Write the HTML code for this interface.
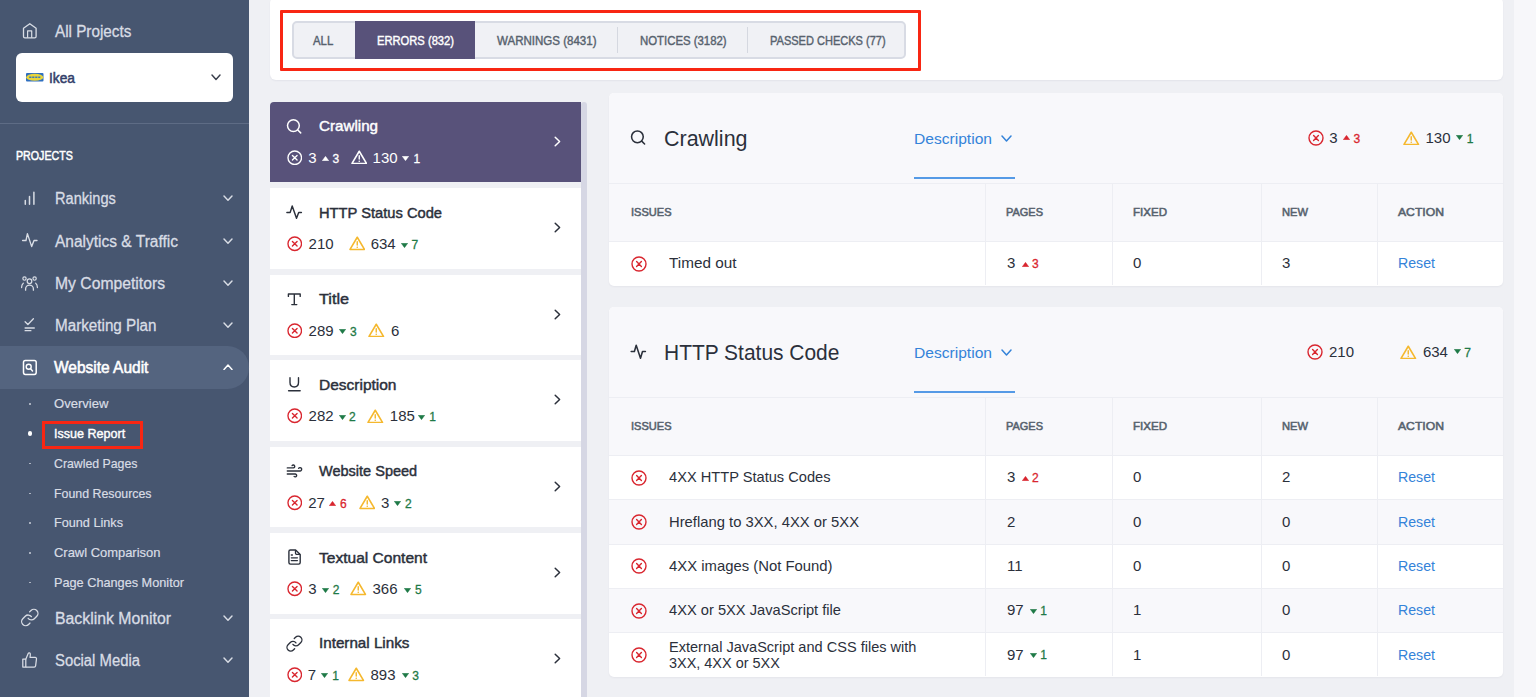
<!DOCTYPE html>
<html><head><meta charset="utf-8"><style>
html,body{margin:0;padding:0;}
body{width:1536px;height:697px;overflow:hidden;position:relative;background:#eff0f4;font-family:"Liberation Sans", sans-serif;}
</style></head><body>
<div style="position:absolute;left:0px;top:0px;width:249px;height:697px;background:#475670;"></div>
<svg style="position:absolute;left:20px;top:20px;" width="20" height="21" viewBox="20 20 20 21" fill="none"><path d="M23.5 28.3L29.8 23.7L36.1 28.3V36.4Q36.1 37.8 34.7 37.8H24.9Q23.5 37.8 23.5 36.4Z" stroke="#d9dde5" stroke-width="1.3" stroke-linejoin="round"/><path d="M27.6 37.8V30.8H31.7V37.8" stroke="#d9dde5" stroke-width="1.2" stroke-linejoin="round"/></svg>
<div style="position:absolute;left:54.50px;top:22.80px;font-size:16px;line-height:17.00px;font-weight:400;color:#d9dde5;white-space:nowrap;transform:scaleX(0.9533);transform-origin:0 0;-webkit-text-stroke:0.3px currentColor;">All Projects</div>
<div style="position:absolute;left:16px;top:53px;width:217px;height:48.6px;background:#fff;border-radius:6px;"></div>
<svg style="position:absolute;left:26px;top:73px;" width="17.5" height="8.5" viewBox="0 0 17.5 8.5" fill="none"><rect x="0" y="0" width="17.5" height="8.5" rx="1" fill="#2f6fc0"/><ellipse cx="8.75" cy="4.25" rx="8.5" ry="3.6" fill="#e8d43a"/><path d="M3.2 4.25H14.3" stroke="#3a7ab8" stroke-width="1.5" stroke-dasharray="2.2 0.8"/></svg>
<div style="position:absolute;left:48.90px;top:68.80px;font-size:15px;line-height:17.00px;font-weight:400;color:#33406a;white-space:nowrap;transform:scaleX(0.9159);transform-origin:0 0;-webkit-text-stroke:0.55px currentColor;">Ikea</div>
<svg style="position:absolute;left:211.3px;top:74.3px;" width="10" height="6.4" viewBox="0 0 10 6.4" fill="none"><path d="M1 1L5.0 5.4L9 1" stroke="#3a3f4c" stroke-width="1.45" stroke-linecap="round" stroke-linejoin="round"/></svg>
<div style="position:absolute;left:0px;top:123px;width:249px;height:1px;background:#5e6c85;"></div>
<div style="position:absolute;left:16.00px;top:149.20px;font-size:12px;line-height:14.00px;font-weight:400;color:#ffffff;white-space:nowrap;transform:scaleX(0.8872);transform-origin:0 0;-webkit-text-stroke:0.5px currentColor;">PROJECTS</div>
<div style="position:absolute;left:54.60px;top:190.00px;font-size:16px;line-height:17.00px;font-weight:400;color:#d9dde5;white-space:nowrap;transform:scaleX(0.9113);transform-origin:0 0;-webkit-text-stroke:0.3px currentColor;">Rankings</div>
<svg style="position:absolute;left:222.6px;top:195px;" width="10" height="6.2" viewBox="0 0 10 6.2" fill="none"><path d="M1 1L5.0 5.2L9 1" stroke="#d9dde5" stroke-width="1.45" stroke-linecap="round" stroke-linejoin="round"/></svg>
<div style="position:absolute;left:54.60px;top:232.50px;font-size:16px;line-height:17.00px;font-weight:400;color:#d9dde5;white-space:nowrap;transform:scaleX(0.9694);transform-origin:0 0;-webkit-text-stroke:0.3px currentColor;">Analytics &amp; Traffic</div>
<svg style="position:absolute;left:222.6px;top:237.5px;" width="10" height="6.2" viewBox="0 0 10 6.2" fill="none"><path d="M1 1L5.0 5.2L9 1" stroke="#d9dde5" stroke-width="1.45" stroke-linecap="round" stroke-linejoin="round"/></svg>
<div style="position:absolute;left:54.60px;top:274.80px;font-size:16px;line-height:17.00px;font-weight:400;color:#d9dde5;white-space:nowrap;transform:scaleX(0.9818);transform-origin:0 0;-webkit-text-stroke:0.3px currentColor;">My Competitors</div>
<svg style="position:absolute;left:222.6px;top:279.8px;" width="10" height="6.2" viewBox="0 0 10 6.2" fill="none"><path d="M1 1L5.0 5.2L9 1" stroke="#d9dde5" stroke-width="1.45" stroke-linecap="round" stroke-linejoin="round"/></svg>
<div style="position:absolute;left:54.60px;top:317.20px;font-size:16px;line-height:17.00px;font-weight:400;color:#d9dde5;white-space:nowrap;transform:scaleX(0.9511);transform-origin:0 0;-webkit-text-stroke:0.3px currentColor;">Marketing Plan</div>
<svg style="position:absolute;left:222.6px;top:322.2px;" width="10" height="6.2" viewBox="0 0 10 6.2" fill="none"><path d="M1 1L5.0 5.2L9 1" stroke="#d9dde5" stroke-width="1.45" stroke-linecap="round" stroke-linejoin="round"/></svg>
<svg style="position:absolute;left:20px;top:188px;" width="20" height="20" viewBox="20 188 20 20" fill="none"><path d="M25.3 204.3V200.6M29.5 204.3V196.4M33.9 204.3V192.3" stroke="#d9dde5" stroke-width="1.5" stroke-linecap="round"/></svg>
<svg style="position:absolute;left:20px;top:230px;" width="20" height="20" viewBox="20 230 20 20" fill="none"><path d="M22.6 240.5H26L27.4 233.6L31.7 246.6L34 240.5H37" stroke="#d9dde5" stroke-width="1.35" stroke-linecap="round" stroke-linejoin="round"/></svg>
<svg style="position:absolute;left:18px;top:272px;" width="24" height="22" viewBox="18 272 24 22" fill="none"><circle cx="29.5" cy="281.2" r="2.3" stroke="#d9dde5" stroke-width="1.25"/><circle cx="24.5" cy="278.6" r="1.65" stroke="#d9dde5" stroke-width="1.2"/><circle cx="34.6" cy="278.6" r="1.65" stroke="#d9dde5" stroke-width="1.2"/><path d="M25.6 290.2V288.9C25.6 286.8 27.3 285.1 29.5 285.1C31.7 285.1 33.4 286.8 33.4 288.9V290.2" stroke="#d9dde5" stroke-width="1.3" stroke-linecap="round"/><path d="M21.6 287.6C21.6 285.6 22.2 284 23.3 283.2M37.4 287.6C37.4 285.6 36.8 284 35.7 283.2" stroke="#d9dde5" stroke-width="1.25" stroke-linecap="round"/></svg>
<svg style="position:absolute;left:20px;top:314px;" width="20" height="20" viewBox="20 314 20 20" fill="none"><path d="M25.1 321.7L27.9 324.5L33.4 318.8" stroke="#d9dde5" stroke-width="1.3" stroke-linecap="round" stroke-linejoin="round"/><path d="M25.1 328H34.3M25.1 330.7H30.9" stroke="#d9dde5" stroke-width="1.3" stroke-linecap="round"/></svg>
<div style="position:absolute;left:0px;top:345.8px;width:248.5px;height:43px;background:#54647f;border-radius:0 21.5px 21.5px 0;"></div>
<svg style="position:absolute;left:20px;top:357px;" width="20" height="21" viewBox="20 357 20 21" fill="none"><rect x="23.5" y="360.5" width="12.7" height="13.9" rx="1.8" stroke="#fff" stroke-width="1.5"/><circle cx="28.7" cy="366.7" r="2.5" stroke="#fff" stroke-width="1.4"/><path d="M30.6 368.7L32.5 370.9" stroke="#fff" stroke-width="1.5" stroke-linecap="round"/></svg>
<div style="position:absolute;left:54.40px;top:359.30px;font-size:16px;line-height:17.00px;font-weight:400;color:#ffffff;white-space:nowrap;transform:scaleX(0.9676);transform-origin:0 0;-webkit-text-stroke:0.55px currentColor;">Website Audit</div>
<svg style="position:absolute;left:222.6px;top:364px;" width="10" height="6.4" viewBox="0 0 10 6.4" fill="none"><path d="M1 5.4L5.0 1L9 5.4" stroke="#ffffff" stroke-width="1.5" stroke-linecap="round" stroke-linejoin="round"/></svg>
<div style="position:absolute;left:54.30px;top:396.00px;font-size:13px;line-height:15.00px;font-weight:400;color:#d9dde5;white-space:nowrap;transform:scaleX(1.0035);transform-origin:0 0;-webkit-text-stroke:0.2px currentColor;">Overview</div>
<div style="position:absolute;left:29px;top:403px;width:1.6px;height:1.6px;background:#d9dde5;border-radius:50%;opacity:0.8;"></div>
<div style="position:absolute;left:54.30px;top:425.70px;font-size:13px;line-height:15.00px;font-weight:400;color:#ffffff;white-space:nowrap;transform:scaleX(0.9659);transform-origin:0 0;-webkit-text-stroke:0.4px currentColor;">Issue Report</div>
<div style="position:absolute;left:27.5px;top:431.3px;width:4.5px;height:4.5px;background:#fff;border-radius:50%;"></div>
<div style="position:absolute;left:54.30px;top:455.70px;font-size:13px;line-height:15.00px;font-weight:400;color:#d9dde5;white-space:nowrap;transform:scaleX(0.9459);transform-origin:0 0;-webkit-text-stroke:0.2px currentColor;">Crawled Pages</div>
<div style="position:absolute;left:29px;top:462.7px;width:1.6px;height:1.6px;background:#d9dde5;border-radius:50%;opacity:0.8;"></div>
<div style="position:absolute;left:54.30px;top:485.90px;font-size:13px;line-height:15.00px;font-weight:400;color:#d9dde5;white-space:nowrap;transform:scaleX(0.9503);transform-origin:0 0;-webkit-text-stroke:0.2px currentColor;">Found Resources</div>
<div style="position:absolute;left:29px;top:492.9px;width:1.6px;height:1.6px;background:#d9dde5;border-radius:50%;opacity:0.8;"></div>
<div style="position:absolute;left:54.30px;top:515.30px;font-size:13px;line-height:15.00px;font-weight:400;color:#d9dde5;white-space:nowrap;transform:scaleX(0.9743);transform-origin:0 0;-webkit-text-stroke:0.2px currentColor;">Found Links</div>
<div style="position:absolute;left:29px;top:522.3px;width:1.6px;height:1.6px;background:#d9dde5;border-radius:50%;opacity:0.8;"></div>
<div style="position:absolute;left:54.30px;top:545.00px;font-size:13px;line-height:15.00px;font-weight:400;color:#d9dde5;white-space:nowrap;transform:scaleX(0.9951);transform-origin:0 0;-webkit-text-stroke:0.2px currentColor;">Crawl Comparison</div>
<div style="position:absolute;left:29px;top:552px;width:1.6px;height:1.6px;background:#d9dde5;border-radius:50%;opacity:0.8;"></div>
<div style="position:absolute;left:54.30px;top:574.50px;font-size:13px;line-height:15.00px;font-weight:400;color:#d9dde5;white-space:nowrap;transform:scaleX(0.9775);transform-origin:0 0;-webkit-text-stroke:0.2px currentColor;">Page Changes Monitor</div>
<div style="position:absolute;left:29px;top:581.5px;width:1.6px;height:1.6px;background:#d9dde5;border-radius:50%;opacity:0.8;"></div>
<div style="position:absolute;left:42px;top:421px;width:101px;height:28px;border:3px solid #f82613;box-sizing:border-box;"></div>
<div style="position:absolute;left:54.60px;top:609.50px;font-size:16px;line-height:17.00px;font-weight:400;color:#d9dde5;white-space:nowrap;transform:scaleX(0.9884);transform-origin:0 0;-webkit-text-stroke:0.3px currentColor;">Backlink Monitor</div>
<svg style="position:absolute;left:222.6px;top:614.5px;" width="10" height="6.2" viewBox="0 0 10 6.2" fill="none"><path d="M1 1L5.0 5.2L9 1" stroke="#d9dde5" stroke-width="1.45" stroke-linecap="round" stroke-linejoin="round"/></svg>
<div style="position:absolute;left:54.60px;top:651.80px;font-size:16px;line-height:17.00px;font-weight:400;color:#d9dde5;white-space:nowrap;transform:scaleX(0.9275);transform-origin:0 0;-webkit-text-stroke:0.3px currentColor;">Social Media</div>
<svg style="position:absolute;left:222.6px;top:656.6px;" width="10" height="6.2" viewBox="0 0 10 6.2" fill="none"><path d="M1 1L5.0 5.2L9 1" stroke="#d9dde5" stroke-width="1.45" stroke-linecap="round" stroke-linejoin="round"/></svg>
<svg style="position:absolute;left:18px;top:605px" width="24" height="24" viewBox="18 605 24 24" fill="none"><g transform="translate(19.95 607.65) scale(0.82)" stroke="#d9dde5" stroke-width="1.6" stroke-linecap="round" stroke-linejoin="round"><path d="M10 13a5 5 0 0 0 7.54.54l3-3a5 5 0 0 0-7.07-7.07l-1.72 1.71"/><path d="M14 11a5 5 0 0 0-7.54-.54l-3 3a5 5 0 0 0 7.07 7.07l1.71-1.71"/></g></svg>
<svg style="position:absolute;left:20px;top:649px;" width="20" height="21" viewBox="20 649 20 21" fill="none"><path d="M22.8 659H25.8V667H22.8Z" stroke="#d9dde5" stroke-width="1.25" stroke-linejoin="round"/><path d="M25.8 659.2L28.2 653.6C28.5 652.9 29.8 652.6 30.2 653.5C30.5 654.2 30.2 656.4 30 657.4H35.2C36 657.4 36.6 658.1 36.5 658.9L35.6 665.8C35.5 666.5 34.9 667 34.2 667H25.8" stroke="#d9dde5" stroke-width="1.25" stroke-linejoin="round"/></svg>
<div style="position:absolute;left:1514px;top:0px;width:22px;height:697px;background:#f7f7fa;"></div>
<div style="position:absolute;left:270px;top:-3px;width:1233px;height:83px;background:#fff;border-radius:6px;box-shadow:0 1px 2px rgba(40,40,80,0.06);"></div>
<div style="position:absolute;left:291.5px;top:21px;width:614.5px;height:37.7px;background:#f0f1f5;border:2px solid #d8dbe4;border-radius:5px;box-sizing:border-box;"></div>
<div style="position:absolute;left:355.3px;top:21px;width:119.5px;height:37.7px;background:#58527a;"></div>
<div style="position:absolute;left:617px;top:27px;width:1px;height:26px;background:#d5d8e0;"></div>
<div style="position:absolute;left:747px;top:27px;width:1px;height:26px;background:#d5d8e0;"></div>
<div style="position:absolute;left:312.80px;top:33.70px;font-size:12px;line-height:14.00px;font-weight:400;color:#57626e;white-space:nowrap;transform:scaleX(0.9457);transform-origin:0 0;-webkit-text-stroke:0.4px currentColor;">ALL</div>
<div style="position:absolute;left:376.70px;top:33.70px;font-size:12px;line-height:14.00px;font-weight:400;color:#ffffff;white-space:nowrap;transform:scaleX(0.9313);transform-origin:0 0;-webkit-text-stroke:0.4px currentColor;">ERRORS (832)</div>
<div style="position:absolute;left:497.00px;top:33.70px;font-size:12px;line-height:14.00px;font-weight:400;color:#57626e;white-space:nowrap;transform:scaleX(0.9605);transform-origin:0 0;-webkit-text-stroke:0.4px currentColor;">WARNINGS (8431)</div>
<div style="position:absolute;left:639.70px;top:33.70px;font-size:12px;line-height:14.00px;font-weight:400;color:#57626e;white-space:nowrap;transform:scaleX(0.9480);transform-origin:0 0;-webkit-text-stroke:0.4px currentColor;">NOTICES (3182)</div>
<div style="position:absolute;left:769.70px;top:33.70px;font-size:12px;line-height:14.00px;font-weight:400;color:#57626e;white-space:nowrap;transform:scaleX(0.9188);transform-origin:0 0;-webkit-text-stroke:0.4px currentColor;">PASSED CHECKS (77)</div>
<div style="position:absolute;left:280px;top:10px;width:641px;height:61px;border:3px solid #f82613;box-sizing:border-box;border-radius:1px;"></div>
<div style="position:absolute;left:581px;top:101.8px;width:6px;height:600px;background:#d6d7e4;border-radius:3px 3px 0 0;"></div>
<div style="position:absolute;left:270px;top:101.5px;width:311px;height:80.5px;background:#58527a;border-radius:4px 0 0 0;"></div>
<div style="position:absolute;left:319.40px;top:117.00px;font-size:15px;line-height:17.00px;font-weight:400;color:#ffffff;white-space:nowrap;transform:scaleX(1.0111);transform-origin:0 0;-webkit-text-stroke:0.45px currentColor;">Crawling</div>
<svg style="position:absolute;left:283px;top:111.5px;" width="22" height="28.0" viewBox="283 111.5 22 28.0" fill="none"><circle cx="293.4" cy="125.1" r="5.9" stroke="#ffffff" stroke-width="1.5"/><path d="M297.8 129.5L300.7 132.4" stroke="#ffffff" stroke-width="1.5" stroke-linecap="round"/></svg>
<svg style="position:absolute;left:554.1px;top:135.8px;" width="7" height="11" viewBox="0 0 7 11" fill="none"><path d="M1.2 1.2L5.6 5.5L1.2 9.8" stroke="#ffffff" stroke-width="1.5" stroke-linecap="round" stroke-linejoin="round"/></svg>
<svg style="position:absolute;left:286.8px;top:149.7px;" width="15.5" height="15.5" viewBox="0 0 16 16" fill="none"><circle cx="8" cy="8" r="7" stroke="#ffffff" stroke-width="1.4"/><path d="M5.6 5.6L10.4 10.4M10.4 5.6L5.6 10.4" stroke="#ffffff" stroke-width="1.4" stroke-linecap="round"/></svg>
<div style="position:absolute;left:308.30px;top:148.50px;font-size:15px;line-height:17.00px;font-weight:400;color:#ffffff;white-space:nowrap;">3</div>
<svg style="position:absolute;left:322px;top:156.0px;" width="7" height="5" viewBox="0 0 7 5" fill="none"><path d="M3.5 0.3L6.8 4.8H0.2Z" fill="#ffffff" stroke="#ffffff" stroke-width="0.4" stroke-linejoin="round"/></svg>
<div style="position:absolute;left:332.40px;top:151.50px;font-size:12px;line-height:14.00px;font-weight:400;color:#ffffff;white-space:nowrap;-webkit-text-stroke:0.3px currentColor;">3</div>
<svg style="position:absolute;left:350.8px;top:149.9px;" width="16.5" height="14.5" viewBox="0 0 16 14" fill="none"><path d="M8 1.2L15 13H1Z" stroke="#ffffff" stroke-width="1.55" stroke-linejoin="round"/><path d="M8 5.5V8.8" stroke="#ffffff" stroke-width="1.4" stroke-linecap="round"/><circle cx="8" cy="10.9" r="0.8" fill="#ffffff"/></svg>
<div style="position:absolute;left:372.60px;top:148.50px;font-size:15px;line-height:17.00px;font-weight:400;color:#ffffff;white-space:nowrap;">130</div>
<svg style="position:absolute;left:402px;top:156.0px;" width="7" height="5" viewBox="0 0 7 5" fill="none"><path d="M0.2 0.2H6.8L3.5 4.7Z" fill="#ffffff" stroke="#ffffff" stroke-width="0.4" stroke-linejoin="round"/></svg>
<div style="position:absolute;left:413.50px;top:151.50px;font-size:12px;line-height:14.00px;font-weight:400;color:#ffffff;white-space:nowrap;-webkit-text-stroke:0.3px currentColor;">1</div>
<div style="position:absolute;left:270px;top:188px;width:311px;height:80.5px;background:#fff;border-radius:0;"></div>
<div style="position:absolute;left:319.40px;top:203.50px;font-size:15px;line-height:17.00px;font-weight:400;color:#2b303b;white-space:nowrap;transform:scaleX(0.9791);transform-origin:0 0;-webkit-text-stroke:0.45px currentColor;">HTTP Status Code</div>
<svg style="position:absolute;left:283px;top:198px;" width="22" height="28" viewBox="283 198 22 28" fill="none"><path d="M286.9 212.4H290.2L292.2 206L296.5 218.3L298.7 212.4H301.4" stroke="#2b303b" stroke-width="1.45" stroke-linecap="round" stroke-linejoin="round"/></svg>
<svg style="position:absolute;left:554.1px;top:222.3px;" width="7" height="11" viewBox="0 0 7 11" fill="none"><path d="M1.2 1.2L5.6 5.5L1.2 9.8" stroke="#2b303b" stroke-width="1.5" stroke-linecap="round" stroke-linejoin="round"/></svg>
<svg style="position:absolute;left:286.8px;top:236.2px;" width="15.5" height="15.5" viewBox="0 0 16 16" fill="none"><circle cx="8" cy="8" r="7" stroke="#d9262f" stroke-width="1.4"/><path d="M5.6 5.6L10.4 10.4M10.4 5.6L5.6 10.4" stroke="#d9262f" stroke-width="1.4" stroke-linecap="round"/></svg>
<div style="position:absolute;left:308.60px;top:235.00px;font-size:15px;line-height:17.00px;font-weight:400;color:#2b303b;white-space:nowrap;">210</div>
<svg style="position:absolute;left:348.6px;top:236.4px;" width="16.5" height="14.5" viewBox="0 0 16 14" fill="none"><path d="M8 1.2L15 13H1Z" stroke="#f5b82e" stroke-width="1.55" stroke-linejoin="round"/><path d="M8 5.5V8.8" stroke="#f5b82e" stroke-width="1.4" stroke-linecap="round"/><circle cx="8" cy="10.9" r="0.8" fill="#f5b82e"/></svg>
<div style="position:absolute;left:370.70px;top:235.00px;font-size:15px;line-height:17.00px;font-weight:400;color:#2b303b;white-space:nowrap;">634</div>
<svg style="position:absolute;left:401.4px;top:242.5px;" width="7" height="5" viewBox="0 0 7 5" fill="none"><path d="M0.2 0.2H6.8L3.5 4.7Z" fill="#1f7a47" stroke="#1f7a47" stroke-width="0.4" stroke-linejoin="round"/></svg>
<div style="position:absolute;left:411.50px;top:238.00px;font-size:12px;line-height:14.00px;font-weight:400;color:#1f7a47;white-space:nowrap;-webkit-text-stroke:0.3px currentColor;">7</div>
<div style="position:absolute;left:270px;top:274.5px;width:311px;height:80.5px;background:#fff;border-radius:0;"></div>
<div style="position:absolute;left:319.40px;top:290.00px;font-size:15px;line-height:17.00px;font-weight:400;color:#2b303b;white-space:nowrap;transform:scaleX(1.0796);transform-origin:0 0;-webkit-text-stroke:0.45px currentColor;">Title</div>
<svg style="position:absolute;left:283px;top:284.5px;" width="22" height="28.0" viewBox="283 284.5 22 28.0" fill="none"><path d="M288.4 295.9V293.5H300.2V295.9M294.3 293.5V304.1M291.8 304.1H296.8" stroke="#2b303b" stroke-width="1.4" stroke-linecap="round" stroke-linejoin="round"/></svg>
<svg style="position:absolute;left:554.1px;top:308.8px;" width="7" height="11" viewBox="0 0 7 11" fill="none"><path d="M1.2 1.2L5.6 5.5L1.2 9.8" stroke="#2b303b" stroke-width="1.5" stroke-linecap="round" stroke-linejoin="round"/></svg>
<svg style="position:absolute;left:286.5px;top:322.7px;" width="15.5" height="15.5" viewBox="0 0 16 16" fill="none"><circle cx="8" cy="8" r="7" stroke="#d9262f" stroke-width="1.4"/><path d="M5.6 5.6L10.4 10.4M10.4 5.6L5.6 10.4" stroke="#d9262f" stroke-width="1.4" stroke-linecap="round"/></svg>
<div style="position:absolute;left:308.60px;top:321.50px;font-size:15px;line-height:17.00px;font-weight:400;color:#2b303b;white-space:nowrap;">289</div>
<svg style="position:absolute;left:339.2px;top:329.0px;" width="7" height="5" viewBox="0 0 7 5" fill="none"><path d="M0.2 0.2H6.8L3.5 4.7Z" fill="#1f7a47" stroke="#1f7a47" stroke-width="0.4" stroke-linejoin="round"/></svg>
<div style="position:absolute;left:350.00px;top:324.50px;font-size:12px;line-height:14.00px;font-weight:400;color:#1f7a47;white-space:nowrap;-webkit-text-stroke:0.3px currentColor;">3</div>
<svg style="position:absolute;left:368.3px;top:322.9px;" width="16.5" height="14.5" viewBox="0 0 16 14" fill="none"><path d="M8 1.2L15 13H1Z" stroke="#f5b82e" stroke-width="1.55" stroke-linejoin="round"/><path d="M8 5.5V8.8" stroke="#f5b82e" stroke-width="1.4" stroke-linecap="round"/><circle cx="8" cy="10.9" r="0.8" fill="#f5b82e"/></svg>
<div style="position:absolute;left:390.90px;top:321.50px;font-size:15px;line-height:17.00px;font-weight:400;color:#2b303b;white-space:nowrap;">6</div>
<div style="position:absolute;left:270px;top:360.1px;width:311px;height:80.5px;background:#fff;border-radius:0;"></div>
<div style="position:absolute;left:319.40px;top:375.60px;font-size:15px;line-height:17.00px;font-weight:400;color:#2b303b;white-space:nowrap;transform:scaleX(1.0328);transform-origin:0 0;-webkit-text-stroke:0.45px currentColor;">Description</div>
<svg style="position:absolute;left:283px;top:370.1px;" width="22" height="28.0" viewBox="283 370.1 22 28.0" fill="none"><path d="M290 377.90000000000003V382.70000000000005C290 385.40000000000003 291.9 387.1 294.25 387.1C296.6 387.1 298.5 385.40000000000003 298.5 382.70000000000005V377.90000000000003" stroke="#2b303b" stroke-width="1.4" stroke-linecap="round"/><path d="M288.6 390.8H300.1" stroke="#2b303b" stroke-width="1.5" stroke-linecap="round"/></svg>
<svg style="position:absolute;left:554.1px;top:394.40000000000003px;" width="7" height="11" viewBox="0 0 7 11" fill="none"><path d="M1.2 1.2L5.6 5.5L1.2 9.8" stroke="#2b303b" stroke-width="1.5" stroke-linecap="round" stroke-linejoin="round"/></svg>
<svg style="position:absolute;left:286.5px;top:408.3px;" width="15.5" height="15.5" viewBox="0 0 16 16" fill="none"><circle cx="8" cy="8" r="7" stroke="#d9262f" stroke-width="1.4"/><path d="M5.6 5.6L10.4 10.4M10.4 5.6L5.6 10.4" stroke="#d9262f" stroke-width="1.4" stroke-linecap="round"/></svg>
<div style="position:absolute;left:308.60px;top:407.10px;font-size:15px;line-height:17.00px;font-weight:400;color:#2b303b;white-space:nowrap;">282</div>
<svg style="position:absolute;left:339px;top:414.6px;" width="7" height="5" viewBox="0 0 7 5" fill="none"><path d="M0.2 0.2H6.8L3.5 4.7Z" fill="#1f7a47" stroke="#1f7a47" stroke-width="0.4" stroke-linejoin="round"/></svg>
<div style="position:absolute;left:349.00px;top:410.10px;font-size:12px;line-height:14.00px;font-weight:400;color:#1f7a47;white-space:nowrap;-webkit-text-stroke:0.3px currentColor;">2</div>
<svg style="position:absolute;left:367.2px;top:408.5px;" width="16.5" height="14.5" viewBox="0 0 16 14" fill="none"><path d="M8 1.2L15 13H1Z" stroke="#f5b82e" stroke-width="1.55" stroke-linejoin="round"/><path d="M8 5.5V8.8" stroke="#f5b82e" stroke-width="1.4" stroke-linecap="round"/><circle cx="8" cy="10.9" r="0.8" fill="#f5b82e"/></svg>
<div style="position:absolute;left:389.80px;top:407.10px;font-size:15px;line-height:17.00px;font-weight:400;color:#2b303b;white-space:nowrap;">185</div>
<svg style="position:absolute;left:417.8px;top:414.6px;" width="7" height="5" viewBox="0 0 7 5" fill="none"><path d="M0.2 0.2H6.8L3.5 4.7Z" fill="#1f7a47" stroke="#1f7a47" stroke-width="0.4" stroke-linejoin="round"/></svg>
<div style="position:absolute;left:429.20px;top:410.10px;font-size:12px;line-height:14.00px;font-weight:400;color:#1f7a47;white-space:nowrap;-webkit-text-stroke:0.3px currentColor;">1</div>
<div style="position:absolute;left:270px;top:446.9px;width:311px;height:80.5px;background:#fff;border-radius:0;"></div>
<div style="position:absolute;left:319.40px;top:462.40px;font-size:15px;line-height:17.00px;font-weight:400;color:#2b303b;white-space:nowrap;transform:scaleX(0.9677);transform-origin:0 0;-webkit-text-stroke:0.45px currentColor;">Website Speed</div>
<svg style="position:absolute;left:283px;top:456.9px;" width="22" height="28.0" viewBox="283 456.9 22 28.0" fill="none"><path d="M287.3 467.79999999999995H293.4A1.45 1.45 0 1 0 292.1 465.5M287.3 470.9H300.2A1.7 1.7 0 1 0 298.6 468.2M287.3 473.9H295.4A1.45 1.45 0 1 1 294.1 476.29999999999995" stroke="#2b303b" stroke-width="1.4" stroke-linecap="round"/></svg>
<svg style="position:absolute;left:554.1px;top:481.2px;" width="7" height="11" viewBox="0 0 7 11" fill="none"><path d="M1.2 1.2L5.6 5.5L1.2 9.8" stroke="#2b303b" stroke-width="1.5" stroke-linecap="round" stroke-linejoin="round"/></svg>
<svg style="position:absolute;left:286.5px;top:495.09999999999997px;" width="15.5" height="15.5" viewBox="0 0 16 16" fill="none"><circle cx="8" cy="8" r="7" stroke="#d9262f" stroke-width="1.4"/><path d="M5.6 5.6L10.4 10.4M10.4 5.6L5.6 10.4" stroke="#d9262f" stroke-width="1.4" stroke-linecap="round"/></svg>
<div style="position:absolute;left:308.20px;top:493.90px;font-size:15px;line-height:17.00px;font-weight:400;color:#2b303b;white-space:nowrap;">27</div>
<svg style="position:absolute;left:329.4px;top:501.4px;" width="7" height="5" viewBox="0 0 7 5" fill="none"><path d="M3.5 0.3L6.8 4.8H0.2Z" fill="#d9262f" stroke="#d9262f" stroke-width="0.4" stroke-linejoin="round"/></svg>
<div style="position:absolute;left:340.10px;top:496.90px;font-size:12px;line-height:14.00px;font-weight:400;color:#d9262f;white-space:nowrap;-webkit-text-stroke:0.3px currentColor;">6</div>
<svg style="position:absolute;left:358.7px;top:495.29999999999995px;" width="16.5" height="14.5" viewBox="0 0 16 14" fill="none"><path d="M8 1.2L15 13H1Z" stroke="#f5b82e" stroke-width="1.55" stroke-linejoin="round"/><path d="M8 5.5V8.8" stroke="#f5b82e" stroke-width="1.4" stroke-linecap="round"/><circle cx="8" cy="10.9" r="0.8" fill="#f5b82e"/></svg>
<div style="position:absolute;left:381.00px;top:493.90px;font-size:15px;line-height:17.00px;font-weight:400;color:#2b303b;white-space:nowrap;">3</div>
<svg style="position:absolute;left:394px;top:501.4px;" width="7" height="5" viewBox="0 0 7 5" fill="none"><path d="M0.2 0.2H6.8L3.5 4.7Z" fill="#1f7a47" stroke="#1f7a47" stroke-width="0.4" stroke-linejoin="round"/></svg>
<div style="position:absolute;left:405.10px;top:496.90px;font-size:12px;line-height:14.00px;font-weight:400;color:#1f7a47;white-space:nowrap;-webkit-text-stroke:0.3px currentColor;">2</div>
<div style="position:absolute;left:270px;top:533px;width:311px;height:80.5px;background:#fff;border-radius:0;"></div>
<div style="position:absolute;left:319.40px;top:548.50px;font-size:15px;line-height:17.00px;font-weight:400;color:#2b303b;white-space:nowrap;transform:scaleX(1.0360);transform-origin:0 0;-webkit-text-stroke:0.45px currentColor;">Textual Content</div>
<svg style="position:absolute;left:283px;top:543px;" width="22" height="28" viewBox="283 543 22 28" fill="none"><path d="M290.4 550H295.6L300.2 554.5V562.6Q300.2 564.1 298.7 564.1H290.4Q288.9 564.1 288.9 562.6V551.5Q288.9 550 290.4 550Z" stroke="#2b303b" stroke-width="1.4" stroke-linejoin="round"/><path d="M295.5 550.2V553.3Q295.5 554.3 296.5 554.3H300" stroke="#2b303b" stroke-width="1.3" stroke-linejoin="round"/><path d="M291.3 555H292.4M291.3 557.8H297.4M291.3 560.6H297.4" stroke="#2b303b" stroke-width="1.3" stroke-linecap="round"/></svg>
<svg style="position:absolute;left:554.1px;top:567.3px;" width="7" height="11" viewBox="0 0 7 11" fill="none"><path d="M1.2 1.2L5.6 5.5L1.2 9.8" stroke="#2b303b" stroke-width="1.5" stroke-linecap="round" stroke-linejoin="round"/></svg>
<svg style="position:absolute;left:286.5px;top:581.2px;" width="15.5" height="15.5" viewBox="0 0 16 16" fill="none"><circle cx="8" cy="8" r="7" stroke="#d9262f" stroke-width="1.4"/><path d="M5.6 5.6L10.4 10.4M10.4 5.6L5.6 10.4" stroke="#d9262f" stroke-width="1.4" stroke-linecap="round"/></svg>
<div style="position:absolute;left:308.20px;top:580.00px;font-size:15px;line-height:17.00px;font-weight:400;color:#2b303b;white-space:nowrap;">3</div>
<svg style="position:absolute;left:322px;top:587.5px;" width="7" height="5" viewBox="0 0 7 5" fill="none"><path d="M0.2 0.2H6.8L3.5 4.7Z" fill="#1f7a47" stroke="#1f7a47" stroke-width="0.4" stroke-linejoin="round"/></svg>
<div style="position:absolute;left:332.80px;top:583.00px;font-size:12px;line-height:14.00px;font-weight:400;color:#1f7a47;white-space:nowrap;-webkit-text-stroke:0.3px currentColor;">2</div>
<svg style="position:absolute;left:350px;top:581.4px;" width="16.5" height="14.5" viewBox="0 0 16 14" fill="none"><path d="M8 1.2L15 13H1Z" stroke="#f5b82e" stroke-width="1.55" stroke-linejoin="round"/><path d="M8 5.5V8.8" stroke="#f5b82e" stroke-width="1.4" stroke-linecap="round"/><circle cx="8" cy="10.9" r="0.8" fill="#f5b82e"/></svg>
<div style="position:absolute;left:372.50px;top:580.00px;font-size:15px;line-height:17.00px;font-weight:400;color:#2b303b;white-space:nowrap;">366</div>
<svg style="position:absolute;left:404px;top:587.5px;" width="7" height="5" viewBox="0 0 7 5" fill="none"><path d="M0.2 0.2H6.8L3.5 4.7Z" fill="#1f7a47" stroke="#1f7a47" stroke-width="0.4" stroke-linejoin="round"/></svg>
<div style="position:absolute;left:415.00px;top:583.00px;font-size:12px;line-height:14.00px;font-weight:400;color:#1f7a47;white-space:nowrap;-webkit-text-stroke:0.3px currentColor;">5</div>
<div style="position:absolute;left:270px;top:618.8px;width:311px;height:80.5px;background:#fff;border-radius:0;"></div>
<div style="position:absolute;left:319.40px;top:634.30px;font-size:15px;line-height:17.00px;font-weight:400;color:#2b303b;white-space:nowrap;transform:scaleX(1.0133);transform-origin:0 0;-webkit-text-stroke:0.45px currentColor;">Internal Links</div>
<svg style="position:absolute;left:283px;top:628.8px" width="22" height="28" viewBox="283 628.8 22 28" fill="none"><g transform="translate(285.45 634.4) scale(0.75)" stroke="#2b303b" stroke-width="1.8" stroke-linecap="round" stroke-linejoin="round"><path d="M10 13a5 5 0 0 0 7.54.54l3-3a5 5 0 0 0-7.07-7.07l-1.72 1.71"/><path d="M14 11a5 5 0 0 0-7.54-.54l-3 3a5 5 0 0 0 7.07 7.07l1.71-1.71"/></g></svg>
<svg style="position:absolute;left:554.1px;top:653.0999999999999px;" width="7" height="11" viewBox="0 0 7 11" fill="none"><path d="M1.2 1.2L5.6 5.5L1.2 9.8" stroke="#2b303b" stroke-width="1.5" stroke-linecap="round" stroke-linejoin="round"/></svg>
<svg style="position:absolute;left:286.5px;top:667.0px;" width="15.5" height="15.5" viewBox="0 0 16 16" fill="none"><circle cx="8" cy="8" r="7" stroke="#d9262f" stroke-width="1.4"/><path d="M5.6 5.6L10.4 10.4M10.4 5.6L5.6 10.4" stroke="#d9262f" stroke-width="1.4" stroke-linecap="round"/></svg>
<div style="position:absolute;left:307.80px;top:665.80px;font-size:15px;line-height:17.00px;font-weight:400;color:#2b303b;white-space:nowrap;">7</div>
<svg style="position:absolute;left:321px;top:673.3px;" width="7" height="5" viewBox="0 0 7 5" fill="none"><path d="M0.2 0.2H6.8L3.5 4.7Z" fill="#1f7a47" stroke="#1f7a47" stroke-width="0.4" stroke-linejoin="round"/></svg>
<div style="position:absolute;left:332.20px;top:668.80px;font-size:12px;line-height:14.00px;font-weight:400;color:#1f7a47;white-space:nowrap;-webkit-text-stroke:0.3px currentColor;">1</div>
<svg style="position:absolute;left:348.2px;top:667.1999999999999px;" width="16.5" height="14.5" viewBox="0 0 16 14" fill="none"><path d="M8 1.2L15 13H1Z" stroke="#f5b82e" stroke-width="1.55" stroke-linejoin="round"/><path d="M8 5.5V8.8" stroke="#f5b82e" stroke-width="1.4" stroke-linecap="round"/><circle cx="8" cy="10.9" r="0.8" fill="#f5b82e"/></svg>
<div style="position:absolute;left:370.50px;top:665.80px;font-size:15px;line-height:17.00px;font-weight:400;color:#2b303b;white-space:nowrap;">893</div>
<svg style="position:absolute;left:401.8px;top:673.3px;" width="7" height="5" viewBox="0 0 7 5" fill="none"><path d="M0.2 0.2H6.8L3.5 4.7Z" fill="#1f7a47" stroke="#1f7a47" stroke-width="0.4" stroke-linejoin="round"/></svg>
<div style="position:absolute;left:412.30px;top:668.80px;font-size:12px;line-height:14.00px;font-weight:400;color:#1f7a47;white-space:nowrap;-webkit-text-stroke:0.3px currentColor;">3</div>
<div style="position:absolute;left:609px;top:93px;width:894px;height:192.5px;background:#fff;border-radius:5px;box-shadow:0 1px 2px rgba(40,40,80,0.05);overflow:hidden;"></div>
<div style="position:absolute;left:609px;top:93px;width:894px;height:89.5px;background:#f8f8fb;border-radius:5px 5px 0 0;"></div>
<div style="position:absolute;left:609px;top:182.5px;width:894px;height:1px;background:#edeef3;"></div>
<div style="position:absolute;left:609px;top:183.5px;width:894px;height:57px;background:#f8f8fb;"></div>
<div style="position:absolute;left:609px;top:240.5px;width:894px;height:1px;background:#edeef3;"></div>
<svg style="position:absolute;left:625px;top:123px;" width="30" height="30" viewBox="625 123 30 30" fill="none"><circle cx="637.4" cy="136.8" r="5.85" stroke="#2b303b" stroke-width="1.55"/><path d="M641.7 141.1L644.6 144" stroke="#2b303b" stroke-width="1.55" stroke-linecap="round"/></svg>
<div style="position:absolute;left:663.50px;top:126.30px;font-size:22px;line-height:25.00px;font-weight:400;color:#2b303b;white-space:nowrap;transform:scaleX(0.9757);transform-origin:0 0;">Crawling</div>
<div style="position:absolute;left:914.00px;top:129.70px;font-size:15px;line-height:17.00px;font-weight:400;color:#3483d9;white-space:nowrap;transform:scaleX(1.0395);transform-origin:0 0;">Description</div>
<svg style="position:absolute;left:1001px;top:134.5px;" width="11" height="7" viewBox="0 0 11 7" fill="none"><path d="M1 1L5.5 6L10 1" stroke="#3483d9" stroke-width="1.5" stroke-linecap="round" stroke-linejoin="round"/></svg>
<div style="position:absolute;left:914px;top:177px;width:100.5px;height:2px;background:#559ae6;"></div>
<svg style="position:absolute;left:1307.5px;top:130.2px;" width="16" height="16" viewBox="0 0 16 16" fill="none"><circle cx="8" cy="8" r="7" stroke="#d9262f" stroke-width="1.4"/><path d="M5.6 5.6L10.4 10.4M10.4 5.6L5.6 10.4" stroke="#d9262f" stroke-width="1.4" stroke-linecap="round"/></svg>
<div style="position:absolute;left:1329.20px;top:129.20px;font-size:15px;line-height:17.00px;font-weight:400;color:#2b303b;white-space:nowrap;">3</div>
<svg style="position:absolute;left:1342.7px;top:135.2px;" width="7" height="5" viewBox="0 0 7 5" fill="none"><path d="M3.5 0.3L6.8 4.8H0.2Z" fill="#d9262f" stroke="#d9262f" stroke-width="0.4" stroke-linejoin="round"/></svg>
<div style="position:absolute;left:1353.60px;top:131.50px;font-size:12px;line-height:14.00px;font-weight:400;color:#d9262f;white-space:nowrap;-webkit-text-stroke:0.3px currentColor;">3</div>
<svg style="position:absolute;left:1403px;top:130.5px;" width="16.5" height="14.5" viewBox="0 0 16 14" fill="none"><path d="M8 1.2L15 13H1Z" stroke="#f5b82e" stroke-width="1.55" stroke-linejoin="round"/><path d="M8 5.5V8.8" stroke="#f5b82e" stroke-width="1.4" stroke-linecap="round"/><circle cx="8" cy="10.9" r="0.8" fill="#f5b82e"/></svg>
<div style="position:absolute;left:1425.50px;top:129.20px;font-size:15px;line-height:17.00px;font-weight:400;color:#2b303b;white-space:nowrap;">130</div>
<svg style="position:absolute;left:1455.5px;top:135.2px;" width="7" height="5" viewBox="0 0 7 5" fill="none"><path d="M0.2 0.2H6.8L3.5 4.7Z" fill="#1f7a47" stroke="#1f7a47" stroke-width="0.4" stroke-linejoin="round"/></svg>
<div style="position:absolute;left:1466.70px;top:131.50px;font-size:12px;line-height:14.00px;font-weight:400;color:#1f7a47;white-space:nowrap;-webkit-text-stroke:0.3px currentColor;">1</div>
<div style="position:absolute;left:630.50px;top:206.00px;font-size:11.5px;line-height:12.00px;font-weight:400;color:#57626e;white-space:nowrap;transform:scaleX(0.9603);transform-origin:0 0;-webkit-text-stroke:0.55px currentColor;">ISSUES</div>
<div style="position:absolute;left:1006.00px;top:206.00px;font-size:11.5px;line-height:12.00px;font-weight:400;color:#57626e;white-space:nowrap;transform:scaleX(0.9540);transform-origin:0 0;-webkit-text-stroke:0.55px currentColor;">PAGES</div>
<div style="position:absolute;left:1132.80px;top:206.00px;font-size:11.5px;line-height:12.00px;font-weight:400;color:#57626e;white-space:nowrap;transform:scaleX(1.0039);transform-origin:0 0;-webkit-text-stroke:0.55px currentColor;">FIXED</div>
<div style="position:absolute;left:1281.50px;top:206.00px;font-size:11.5px;line-height:12.00px;font-weight:400;color:#57626e;white-space:nowrap;transform:scaleX(0.9693);transform-origin:0 0;-webkit-text-stroke:0.55px currentColor;">NEW</div>
<div style="position:absolute;left:1397.60px;top:206.00px;font-size:11.5px;line-height:12.00px;font-weight:400;color:#57626e;white-space:nowrap;transform:scaleX(1.0589);transform-origin:0 0;-webkit-text-stroke:0.55px currentColor;">ACTION</div>
<div style="position:absolute;left:985px;top:183.5px;width:1px;height:100.0px;background:#edeef3;"></div>
<div style="position:absolute;left:1112px;top:183.5px;width:1px;height:100.0px;background:#edeef3;"></div>
<div style="position:absolute;left:1261px;top:183.5px;width:1px;height:100.0px;background:#edeef3;"></div>
<div style="position:absolute;left:1377px;top:183.5px;width:1px;height:100.0px;background:#edeef3;"></div>
<svg style="position:absolute;left:631px;top:255.5px;" width="16" height="16" viewBox="0 0 16 16" fill="none"><circle cx="8" cy="8" r="7" stroke="#d9262f" stroke-width="1.4"/><path d="M5.6 5.6L10.4 10.4M10.4 5.6L5.6 10.4" stroke="#d9262f" stroke-width="1.4" stroke-linecap="round"/></svg>
<div style="position:absolute;left:669.00px;top:254.30px;font-size:15px;line-height:17.00px;font-weight:400;color:#2b303b;white-space:nowrap;transform:scaleX(1.0204);transform-origin:0 0;">Timed out</div>
<div style="position:absolute;left:1007.00px;top:254.30px;font-size:15px;line-height:17.00px;font-weight:400;color:#2b303b;white-space:nowrap;">3</div>
<svg style="position:absolute;left:1021.5999999999999px;top:261.8px;" width="7" height="5" viewBox="0 0 7 5" fill="none"><path d="M3.5 0.3L6.8 4.8H0.2Z" fill="#d9262f" stroke="#d9262f" stroke-width="0.4" stroke-linejoin="round"/></svg>
<div style="position:absolute;left:1031.90px;top:257.00px;font-size:12px;line-height:14.00px;font-weight:400;color:#d9262f;white-space:nowrap;-webkit-text-stroke:0.3px currentColor;">3</div>
<div style="position:absolute;left:1133.00px;top:254.30px;font-size:15px;line-height:17.00px;font-weight:400;color:#2b303b;white-space:nowrap;">0</div>
<div style="position:absolute;left:1282.00px;top:254.30px;font-size:15px;line-height:17.00px;font-weight:400;color:#2b303b;white-space:nowrap;">3</div>
<div style="position:absolute;left:1397.60px;top:254.30px;font-size:15px;line-height:17.00px;font-weight:400;color:#3483d9;white-space:nowrap;transform:scaleX(0.9442);transform-origin:0 0;">Reset</div>
<div style="position:absolute;left:985px;top:241.5px;width:1px;height:43.0px;background:#edeef3;"></div>
<div style="position:absolute;left:1112px;top:241.5px;width:1px;height:43.0px;background:#edeef3;"></div>
<div style="position:absolute;left:1261px;top:241.5px;width:1px;height:43.0px;background:#edeef3;"></div>
<div style="position:absolute;left:1377px;top:241.5px;width:1px;height:43.0px;background:#edeef3;"></div>
<div style="position:absolute;left:609px;top:307px;width:894px;height:370px;background:#fff;border-radius:5px;box-shadow:0 1px 2px rgba(40,40,80,0.05);overflow:hidden;"></div>
<div style="position:absolute;left:609px;top:307px;width:894px;height:89.5px;background:#f8f8fb;border-radius:5px 5px 0 0;"></div>
<div style="position:absolute;left:609px;top:396.5px;width:894px;height:1px;background:#edeef3;"></div>
<div style="position:absolute;left:609px;top:397.5px;width:894px;height:57px;background:#f8f8fb;"></div>
<div style="position:absolute;left:609px;top:454.5px;width:894px;height:1px;background:#edeef3;"></div>
<svg style="position:absolute;left:625px;top:337px;" width="30" height="30" viewBox="625 337 30 30" fill="none"><path d="M631.2 351.5H634.4L636.2 345.2L640.5 358.2L642.5 351.5H645.4" stroke="#2b303b" stroke-width="1.55" stroke-linecap="round" stroke-linejoin="round"/></svg>
<div style="position:absolute;left:663.50px;top:340.30px;font-size:22px;line-height:25.00px;font-weight:400;color:#2b303b;white-space:nowrap;transform:scaleX(0.9520);transform-origin:0 0;">HTTP Status Code</div>
<div style="position:absolute;left:914.00px;top:343.70px;font-size:15px;line-height:17.00px;font-weight:400;color:#3483d9;white-space:nowrap;transform:scaleX(1.0395);transform-origin:0 0;">Description</div>
<svg style="position:absolute;left:1001px;top:348.5px;" width="11" height="7" viewBox="0 0 11 7" fill="none"><path d="M1 1L5.5 6L10 1" stroke="#3483d9" stroke-width="1.5" stroke-linecap="round" stroke-linejoin="round"/></svg>
<div style="position:absolute;left:914px;top:391px;width:100.5px;height:2px;background:#559ae6;"></div>
<svg style="position:absolute;left:1307px;top:344.2px;" width="16" height="16" viewBox="0 0 16 16" fill="none"><circle cx="8" cy="8" r="7" stroke="#d9262f" stroke-width="1.4"/><path d="M5.6 5.6L10.4 10.4M10.4 5.6L5.6 10.4" stroke="#d9262f" stroke-width="1.4" stroke-linecap="round"/></svg>
<div style="position:absolute;left:1329.00px;top:343.20px;font-size:15px;line-height:17.00px;font-weight:400;color:#2b303b;white-space:nowrap;">210</div>
<svg style="position:absolute;left:1400.2px;top:344.5px;" width="16.5" height="14.5" viewBox="0 0 16 14" fill="none"><path d="M8 1.2L15 13H1Z" stroke="#f5b82e" stroke-width="1.55" stroke-linejoin="round"/><path d="M8 5.5V8.8" stroke="#f5b82e" stroke-width="1.4" stroke-linecap="round"/><circle cx="8" cy="10.9" r="0.8" fill="#f5b82e"/></svg>
<div style="position:absolute;left:1422.90px;top:343.20px;font-size:15px;line-height:17.00px;font-weight:400;color:#2b303b;white-space:nowrap;">634</div>
<svg style="position:absolute;left:1453.8px;top:349.2px;" width="7" height="5" viewBox="0 0 7 5" fill="none"><path d="M0.2 0.2H6.8L3.5 4.7Z" fill="#1f7a47" stroke="#1f7a47" stroke-width="0.4" stroke-linejoin="round"/></svg>
<div style="position:absolute;left:1464.30px;top:345.50px;font-size:12px;line-height:14.00px;font-weight:400;color:#1f7a47;white-space:nowrap;-webkit-text-stroke:0.3px currentColor;">7</div>
<div style="position:absolute;left:630.50px;top:420.00px;font-size:11.5px;line-height:12.00px;font-weight:400;color:#57626e;white-space:nowrap;transform:scaleX(0.9603);transform-origin:0 0;-webkit-text-stroke:0.55px currentColor;">ISSUES</div>
<div style="position:absolute;left:1006.00px;top:420.00px;font-size:11.5px;line-height:12.00px;font-weight:400;color:#57626e;white-space:nowrap;transform:scaleX(0.9540);transform-origin:0 0;-webkit-text-stroke:0.55px currentColor;">PAGES</div>
<div style="position:absolute;left:1132.80px;top:420.00px;font-size:11.5px;line-height:12.00px;font-weight:400;color:#57626e;white-space:nowrap;transform:scaleX(1.0039);transform-origin:0 0;-webkit-text-stroke:0.55px currentColor;">FIXED</div>
<div style="position:absolute;left:1281.50px;top:420.00px;font-size:11.5px;line-height:12.00px;font-weight:400;color:#57626e;white-space:nowrap;transform:scaleX(0.9693);transform-origin:0 0;-webkit-text-stroke:0.55px currentColor;">NEW</div>
<div style="position:absolute;left:1397.60px;top:420.00px;font-size:11.5px;line-height:12.00px;font-weight:400;color:#57626e;white-space:nowrap;transform:scaleX(1.0589);transform-origin:0 0;-webkit-text-stroke:0.55px currentColor;">ACTION</div>
<div style="position:absolute;left:985px;top:397.5px;width:1px;height:277.5px;background:#edeef3;"></div>
<div style="position:absolute;left:1112px;top:397.5px;width:1px;height:277.5px;background:#edeef3;"></div>
<div style="position:absolute;left:1261px;top:397.5px;width:1px;height:277.5px;background:#edeef3;"></div>
<div style="position:absolute;left:1377px;top:397.5px;width:1px;height:277.5px;background:#edeef3;"></div>
<svg style="position:absolute;left:631px;top:469.65px;" width="16" height="16" viewBox="0 0 16 16" fill="none"><circle cx="8" cy="8" r="7" stroke="#d9262f" stroke-width="1.4"/><path d="M5.6 5.6L10.4 10.4M10.4 5.6L5.6 10.4" stroke="#d9262f" stroke-width="1.4" stroke-linecap="round"/></svg>
<div style="position:absolute;left:669.00px;top:468.45px;font-size:15px;line-height:17.00px;font-weight:400;color:#2b303b;white-space:nowrap;transform:scaleX(0.9750);transform-origin:0 0;">4XX HTTP Status Codes</div>
<div style="position:absolute;left:1007.00px;top:468.45px;font-size:15px;line-height:17.00px;font-weight:400;color:#2b303b;white-space:nowrap;">3</div>
<svg style="position:absolute;left:1021.5999999999999px;top:475.95px;" width="7" height="5" viewBox="0 0 7 5" fill="none"><path d="M3.5 0.3L6.8 4.8H0.2Z" fill="#d9262f" stroke="#d9262f" stroke-width="0.4" stroke-linejoin="round"/></svg>
<div style="position:absolute;left:1031.90px;top:471.15px;font-size:12px;line-height:14.00px;font-weight:400;color:#d9262f;white-space:nowrap;-webkit-text-stroke:0.3px currentColor;">2</div>
<div style="position:absolute;left:1133.00px;top:468.45px;font-size:15px;line-height:17.00px;font-weight:400;color:#2b303b;white-space:nowrap;">0</div>
<div style="position:absolute;left:1282.00px;top:468.45px;font-size:15px;line-height:17.00px;font-weight:400;color:#2b303b;white-space:nowrap;">2</div>
<div style="position:absolute;left:1397.60px;top:468.45px;font-size:15px;line-height:17.00px;font-weight:400;color:#3483d9;white-space:nowrap;transform:scaleX(0.9442);transform-origin:0 0;">Reset</div>
<div style="position:absolute;left:609px;top:499.8px;width:894px;height:44.3px;background:#f8f8fb;"></div>
<div style="position:absolute;left:609px;top:499.3px;width:894px;height:1px;background:#edeef3;"></div>
<svg style="position:absolute;left:631px;top:513.95px;" width="16" height="16" viewBox="0 0 16 16" fill="none"><circle cx="8" cy="8" r="7" stroke="#d9262f" stroke-width="1.4"/><path d="M5.6 5.6L10.4 10.4M10.4 5.6L5.6 10.4" stroke="#d9262f" stroke-width="1.4" stroke-linecap="round"/></svg>
<div style="position:absolute;left:669.00px;top:512.75px;font-size:15px;line-height:17.00px;font-weight:400;color:#2b303b;white-space:nowrap;transform:scaleX(0.9865);transform-origin:0 0;">Hreflang to 3XX, 4XX or 5XX</div>
<div style="position:absolute;left:1007.00px;top:512.75px;font-size:15px;line-height:17.00px;font-weight:400;color:#2b303b;white-space:nowrap;">2</div>
<div style="position:absolute;left:1133.00px;top:512.75px;font-size:15px;line-height:17.00px;font-weight:400;color:#2b303b;white-space:nowrap;">0</div>
<div style="position:absolute;left:1282.00px;top:512.75px;font-size:15px;line-height:17.00px;font-weight:400;color:#2b303b;white-space:nowrap;">0</div>
<div style="position:absolute;left:1397.60px;top:512.75px;font-size:15px;line-height:17.00px;font-weight:400;color:#3483d9;white-space:nowrap;transform:scaleX(0.9442);transform-origin:0 0;">Reset</div>
<div style="position:absolute;left:609px;top:543.6px;width:894px;height:1px;background:#edeef3;"></div>
<svg style="position:absolute;left:631px;top:558.25px;" width="16" height="16" viewBox="0 0 16 16" fill="none"><circle cx="8" cy="8" r="7" stroke="#d9262f" stroke-width="1.4"/><path d="M5.6 5.6L10.4 10.4M10.4 5.6L5.6 10.4" stroke="#d9262f" stroke-width="1.4" stroke-linecap="round"/></svg>
<div style="position:absolute;left:669.00px;top:557.05px;font-size:15px;line-height:17.00px;font-weight:400;color:#2b303b;white-space:nowrap;transform:scaleX(0.9905);transform-origin:0 0;">4XX images (Not Found)</div>
<div style="position:absolute;left:1007.00px;top:557.05px;font-size:15px;line-height:17.00px;font-weight:400;color:#2b303b;white-space:nowrap;">11</div>
<div style="position:absolute;left:1133.00px;top:557.05px;font-size:15px;line-height:17.00px;font-weight:400;color:#2b303b;white-space:nowrap;">0</div>
<div style="position:absolute;left:1282.00px;top:557.05px;font-size:15px;line-height:17.00px;font-weight:400;color:#2b303b;white-space:nowrap;">0</div>
<div style="position:absolute;left:1397.60px;top:557.05px;font-size:15px;line-height:17.00px;font-weight:400;color:#3483d9;white-space:nowrap;transform:scaleX(0.9442);transform-origin:0 0;">Reset</div>
<div style="position:absolute;left:609px;top:588.4px;width:894px;height:44.3px;background:#f8f8fb;"></div>
<div style="position:absolute;left:609px;top:587.9px;width:894px;height:1px;background:#edeef3;"></div>
<svg style="position:absolute;left:631px;top:602.55px;" width="16" height="16" viewBox="0 0 16 16" fill="none"><circle cx="8" cy="8" r="7" stroke="#d9262f" stroke-width="1.4"/><path d="M5.6 5.6L10.4 10.4M10.4 5.6L5.6 10.4" stroke="#d9262f" stroke-width="1.4" stroke-linecap="round"/></svg>
<div style="position:absolute;left:669.00px;top:601.35px;font-size:15px;line-height:17.00px;font-weight:400;color:#2b303b;white-space:nowrap;transform:scaleX(0.9778);transform-origin:0 0;">4XX or 5XX JavaScript file</div>
<div style="position:absolute;left:1007.00px;top:601.35px;font-size:15px;line-height:17.00px;font-weight:400;color:#2b303b;white-space:nowrap;">97</div>
<svg style="position:absolute;left:1029.9px;top:608.8499999999999px;" width="7" height="5" viewBox="0 0 7 5" fill="none"><path d="M0.2 0.2H6.8L3.5 4.7Z" fill="#1f7a47" stroke="#1f7a47" stroke-width="0.4" stroke-linejoin="round"/></svg>
<div style="position:absolute;left:1040.20px;top:604.05px;font-size:12px;line-height:14.00px;font-weight:400;color:#1f7a47;white-space:nowrap;-webkit-text-stroke:0.3px currentColor;">1</div>
<div style="position:absolute;left:1133.00px;top:601.35px;font-size:15px;line-height:17.00px;font-weight:400;color:#2b303b;white-space:nowrap;">1</div>
<div style="position:absolute;left:1282.00px;top:601.35px;font-size:15px;line-height:17.00px;font-weight:400;color:#2b303b;white-space:nowrap;">0</div>
<div style="position:absolute;left:1397.60px;top:601.35px;font-size:15px;line-height:17.00px;font-weight:400;color:#3483d9;white-space:nowrap;transform:scaleX(0.9442);transform-origin:0 0;">Reset</div>
<div style="position:absolute;left:609px;top:632.2px;width:894px;height:1px;background:#edeef3;"></div>
<svg style="position:absolute;left:631px;top:646.85px;" width="16" height="16" viewBox="0 0 16 16" fill="none"><circle cx="8" cy="8" r="7" stroke="#d9262f" stroke-width="1.4"/><path d="M5.6 5.6L10.4 10.4M10.4 5.6L5.6 10.4" stroke="#d9262f" stroke-width="1.4" stroke-linecap="round"/></svg>
<div style="position:absolute;left:669.00px;top:638.05px;font-size:15px;line-height:17.00px;font-weight:400;color:#2b303b;white-space:nowrap;transform:scaleX(0.9698);transform-origin:0 0;">External JavaScript and CSS files with</div>
<div style="position:absolute;left:669.00px;top:654.05px;font-size:15px;line-height:17.00px;font-weight:400;color:#2b303b;white-space:nowrap;transform:scaleX(0.9631);transform-origin:0 0;">3XX, 4XX or 5XX</div>
<div style="position:absolute;left:1007.00px;top:645.65px;font-size:15px;line-height:17.00px;font-weight:400;color:#2b303b;white-space:nowrap;">97</div>
<svg style="position:absolute;left:1029.9px;top:653.15px;" width="7" height="5" viewBox="0 0 7 5" fill="none"><path d="M0.2 0.2H6.8L3.5 4.7Z" fill="#1f7a47" stroke="#1f7a47" stroke-width="0.4" stroke-linejoin="round"/></svg>
<div style="position:absolute;left:1040.20px;top:648.35px;font-size:12px;line-height:14.00px;font-weight:400;color:#1f7a47;white-space:nowrap;-webkit-text-stroke:0.3px currentColor;">1</div>
<div style="position:absolute;left:1133.00px;top:645.65px;font-size:15px;line-height:17.00px;font-weight:400;color:#2b303b;white-space:nowrap;">1</div>
<div style="position:absolute;left:1282.00px;top:645.65px;font-size:15px;line-height:17.00px;font-weight:400;color:#2b303b;white-space:nowrap;">0</div>
<div style="position:absolute;left:1397.60px;top:645.65px;font-size:15px;line-height:17.00px;font-weight:400;color:#3483d9;white-space:nowrap;transform:scaleX(0.9442);transform-origin:0 0;">Reset</div>
<div style="position:absolute;left:985px;top:455.5px;width:1px;height:220.5px;background:#edeef3;"></div>
<div style="position:absolute;left:1112px;top:455.5px;width:1px;height:220.5px;background:#edeef3;"></div>
<div style="position:absolute;left:1261px;top:455.5px;width:1px;height:220.5px;background:#edeef3;"></div>
<div style="position:absolute;left:1377px;top:455.5px;width:1px;height:220.5px;background:#edeef3;"></div>
</body></html>
